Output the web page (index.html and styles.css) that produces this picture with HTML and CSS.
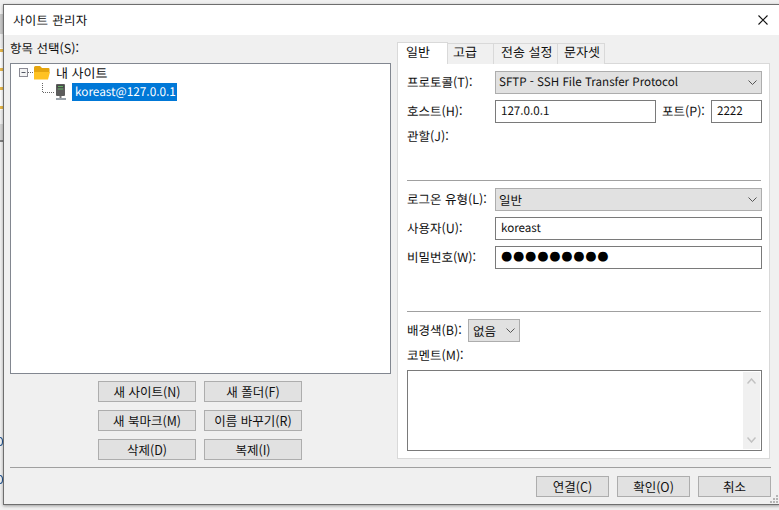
FILE: index.html
```html
<!DOCTYPE html>
<html lang="ko">
<head>
<meta charset="utf-8">
<title>사이트 관리자</title>
<link rel="stylesheet" href="styles.css">
</head>
<body>
<div class="desk">
  <span class="bg-mark mark-a"></span>
  <span class="bg-mark mark-b"></span>
  <span class="bg-band"></span>
  <span class="bg-arc arc-a"></span>
  <span class="bg-arc arc-b"></span>
  <div class="dialog">
    <header class="titlebar">
      <span class="title-text">사이트 관리자</span>
      <svg class="close" width="10" height="10" viewBox="0 0 10 10"><path d="M0.5 0.5L9.5 9.5M9.5 0.5L0.5 9.5" stroke="#111" stroke-width="1.1" fill="none"/></svg>
    </header>
    <div class="body">
      <div class="main">
        <section class="left">
          <div class="left-label">항목 선택(S):</div>
          <div class="tree">
            <div class="tree-row root">
              <svg class="root-icon" width="31" height="18" viewBox="0 0 31 18">
                <rect x="0.5" y="3.5" width="8" height="8" fill="#f4f4f4" stroke="#8a8a94"/>
                <path d="M2.5 7.5H6.5" stroke="#555a66"/>
                <path d="M9 7.5H15" stroke="#666" stroke-dasharray="1 1"/>
                <path d="M15 2.5Q15 1 16.5 1H21L23 3H29.5Q30.500 3 30.500 4V7H15Z" fill="#e5a50e"/>
                <path d="M15 14.500V7H31L29 14.500Z" fill="#ffc222"/>
              </svg>
              <span class="root-label">내 사이트</span>
            </div>
            <div class="tree-row child">
              <svg class="child-icon" width="25" height="18" viewBox="0 0 25 18">
                <path d="M0.5 0V9.500H12" stroke="#666" stroke-dasharray="1 1" fill="none"/>
                <rect x="14" y="1" width="9" height="12" rx="1" fill="#5c5c5c"/>
                <rect x="15" y="2" width="7" height="3" fill="#4a4a4a"/>
                <path d="M16 3.500H21M16 6H21" stroke="#5fae5f"/>
                <path d="M18.500 13V15" stroke="#777" stroke-width="2"/>
                <path d="M14 16H24" stroke="#9aa2aa" stroke-width="2"/>
              </svg>
              <span class="selected">koreast@127.0.0.1</span>
            </div>
          </div>
          <div class="tree-buttons">
            <button class="btn">새 사이트(N)</button>
            <button class="btn">새 폴더(F)</button>
            <button class="btn">새 북마크(M)</button>
            <button class="btn">이름 바꾸기(R)</button>
            <button class="btn">삭제(D)</button>
            <button class="btn">복제(I)</button>
          </div>
        </section>
        <section class="right">
          <nav class="tabs">
            <span class="tab tab-active tab-1">일반</span>
            <span class="tab tab-2">고급</span>
            <span class="tab tab-3">전송 설정</span>
            <span class="tab tab-4">문자셋</span>
          </nav>
          <div class="panel">
            <div class="group group-server">
              <div class="row">
                <label class="row-label">프로토콜(T):</label>
                <div class="select grow">
                  <span class="latin">SFTP - SSH File Transfer Protocol</span>
                  <svg class="chev" width="9" height="5" viewBox="0 0 9 5"><path d="M0.500 0.500L4.500 4.500L8.500 0.500" stroke="#555" fill="none"/></svg>
                </div>
              </div>
              <div class="row">
                <label class="row-label">호스트(H):</label>
                <div class="field grow latin">127.0.0.1</div>
                <label class="port-label">포트(P):</label>
                <div class="field port latin">2222</div>
              </div>
              <div class="row-label scope">관할(J):</div>
            </div>
            <hr class="rule">
            <div class="group group-login">
              <div class="row">
                <label class="row-label">로그온 유형(L):</label>
                <div class="select grow">
                  <span>일반</span>
                  <svg class="chev" width="9" height="5" viewBox="0 0 9 5"><path d="M0.500 0.500L4.500 4.500L8.500 0.500" stroke="#555" fill="none"/></svg>
                </div>
              </div>
              <div class="row">
                <label class="row-label">사용자(U):</label>
                <div class="field grow latin">koreast</div>
              </div>
              <div class="row">
                <label class="row-label">비밀번호(W):</label>
                <div class="field grow dots">●●●●●●●●●</div>
              </div>
            </div>
            <hr class="rule">
            <div class="row color-row">
              <label class="color-label">배경색(B):</label>
              <div class="select color-select">
                <span>없음</span>
                <svg class="chev" width="9" height="5" viewBox="0 0 9 5"><path d="M0.500 0.500L4.500 4.500L8.500 0.500" stroke="#555" fill="none"/></svg>
              </div>
            </div>
            <div class="comment-label">코멘트(M):</div>
            <div class="comment">
              <div class="scrollbar">
                <svg width="9" height="6" viewBox="0 0 9 6"><path d="M0.500 5.500L4.500 1L8.500 5.500" stroke="#c2c2c2" stroke-width="1.500" fill="none"/></svg>
                <svg width="9" height="6" viewBox="0 0 9 6"><path d="M0.500 0.500L4.500 5L8.500 0.500" stroke="#c2c2c2" stroke-width="1.500" fill="none"/></svg>
              </div>
            </div>
          </div>
        </section>
      </div>
      <footer class="footer">
        <button class="btn">연결(C)</button>
        <button class="btn">확인(O)</button>
        <button class="btn">취소</button>
      </footer>
    </div>
    <svg class="grip" width="10" height="10" viewBox="0 0 10 10"><path d="M7 1h2v2h-2zM4 4h2v2h-2zM7 4h2v2h-2zM1 7h2v2h-2zM4 7h2v2h-2zM7 7h2v2h-2z" fill="#b5b5b5"/></svg>
  </div>
</div>
</body>
</html>
```
FILE: styles.css
```css
* { box-sizing: border-box; }
html, body { margin: 0; padding: 0; }
body {
  font-family: "Noto Sans CJK KR", "Noto Sans", sans-serif;
  font-size: 12.500px;
  text-rendering: geometricPrecision;
  color: #111;
}
.desk {
  position: relative;
  width: 779px;
  height: 510px;
  overflow: hidden;
  background: #f0f0f0;
}
.bg-mark { position: absolute; left: 0; width: 3px; }
.mark-a { top: 14px; height: 20px; background: #c9c9c9; }
.mark-b { top: 48px; height: 62px; background: repeating-linear-gradient(#fff 0 1px, #e8b84a 1px 4px, #fff 4px 19px); }
.bg-band { position: absolute; left: 0; top: 124px; width: 3px; height: 18px; background: #d4d4d4; border-bottom: 2px solid #808080; }
.bg-arc {
  position: absolute;
  left: -3px;
  width: 6px;
  height: 9px;
  border: 1px solid #1b4f8c;
  border-radius: 50%;
}
.arc-a { top: 437px; }
.arc-b { top: 475px; }
.dialog {
  position: relative;
  width: 777px;
  height: 501px;
  margin: 4px 0 0 3px;
  border: 1px solid #6e6e6e;
  background: #f0f0f0;
  box-shadow: 0 1px 3px rgba(0, 0, 0, .35);
}
.titlebar {
  display: flex;
  align-items: center;
  justify-content: space-between;
  height: 30px;
  padding: 0 11px 0 9px;
  background: #fff;
}
.title-text { padding-bottom: 2px; letter-spacing: .3px; font-size: 12.500px; }
.close { flex: none; }
.body { padding: 0 6px; }
.main { display: flex; gap: 6px; width: 761px; }
.left { width: 381px; flex: none; }
.left-label { height: 28px; padding-top: 4px; line-height: 17px; }
.tree {
  height: 311px;
  padding: 1px 0 0 0;
  background: #fff;
  border: 1px solid #828790;
}
.tree-row { display: flex; align-items: center; height: 18px; }
.root { padding-left: 8px; }
.root-label { margin-left: 6px; padding-bottom: 4px; font-size: 13px; }
.child { padding-left: 31px; }
.selected {
  margin-left: 5px;
  width: 105px;
  height: 18px;
  padding-left: 3px;
  line-height: 17px;
  font-size: 11.800px;
  background: #0078d7;
  color: #fff;
}
.tree-buttons {
  display: grid;
  grid-template-columns: 98px 98px;
  grid-auto-rows: 21px;
  gap: 8px;
  margin-top: 7px;
  padding-left: 88px;
}
.btn {
  margin: 0;
  padding: 0 0 2px;
  font: inherit;
  color: #111;
  background: #e1e1e1;
  border: 1px solid #adadad;
  border-radius: 0;
}
.right { width: 373px; flex: none; padding-top: 7px; }
.tabs { display: flex; height: 21px; position: relative; z-index: 1; }
.tab {
  height: 21px;
  margin-top: 1px;
  padding-left: 5px;
  border: 1px solid #d9d9d9;
  border-bottom: 0;
  border-left: 0;
  background: #f0f0f0;
  font-size: 13px;
  line-height: 16px;
  white-space: nowrap;
}
.tab-active {
  height: 22px;
  margin-top: 0;
  padding-left: 8px;
  border-left: 1px solid #d9d9d9;
  background: #fff;
  line-height: 17px;
}
.tab-1 { width: 51px; }
.tab-2 { width: 46px; }
.tab-3 { width: 64px; padding-left: 7px; }
.tab-4 { width: 47px; padding-left: 6px; }
.panel {
  height: 396px;
  padding: 7px 7px 0 9px;
  background: #fff;
  border: 1px solid #d9d9d9;
}
.group { display: flex; flex-direction: column; gap: 6px; }
.group-server { height: 109px; }
.group-login { height: 123px; }
.row { display: flex; align-items: center; height: 23px; }
.row-label { width: 88px; flex: none; padding-bottom: 3px; }
.scope { margin-top: -2px; padding: 0; line-height: 17px; }
.grow { flex: 1; }
.latin { font-size: 11.600px; }
.select {
  display: flex;
  align-items: center;
  justify-content: space-between;
  height: 23px;
  padding: 0 4px 1px 3px;
  background: #e1e1e1;
  border: 1px solid #adadad;
}
.chev { margin-top: 1px; }
.field {
  height: 23px;
  padding-left: 5px;
  line-height: 20px;
  background: #fff;
  border: 1px solid #7a7a7a;
}
.port-label { margin-left: 6px; width: 49px; flex: none; padding-bottom: 3px; }
.port { width: 51px; flex: none; padding-left: 5px; }
.dots {
  font-family: "DejaVu Sans", sans-serif;
  font-size: 13px;
  line-height: 20px;
  letter-spacing: .7px;
  color: #000;
}
.rule { height: 1px; margin: 0 1px 7px 0; border: 0; background: #a0a0a0; }
.color-label { width: 61px; flex: none; padding-bottom: 3px; }
.color-select { width: 52px; padding-left: 4px; }
.comment-label { height: 28px; padding-top: 4px; line-height: 17px; }
.comment {
  display: flex;
  justify-content: flex-end;
  height: 81px;
  padding: 1px;
  border: 1px solid #7a7a7a;
}
.scrollbar {
  display: flex;
  flex-direction: column;
  align-items: center;
  justify-content: space-between;
  width: 17px;
  padding: 6px 0;
  background: #f0f0f0;
}
.footer {
  display: flex;
  justify-content: flex-end;
  gap: 8px;
  width: 761px;
  margin-top: 7px;
  padding-top: 8px;
  border-top: 1px solid #a0a0a0;
}
.footer .btn { width: 73px; height: 21px; }
.grip { position: absolute; right: 0; bottom: 0; }
```
